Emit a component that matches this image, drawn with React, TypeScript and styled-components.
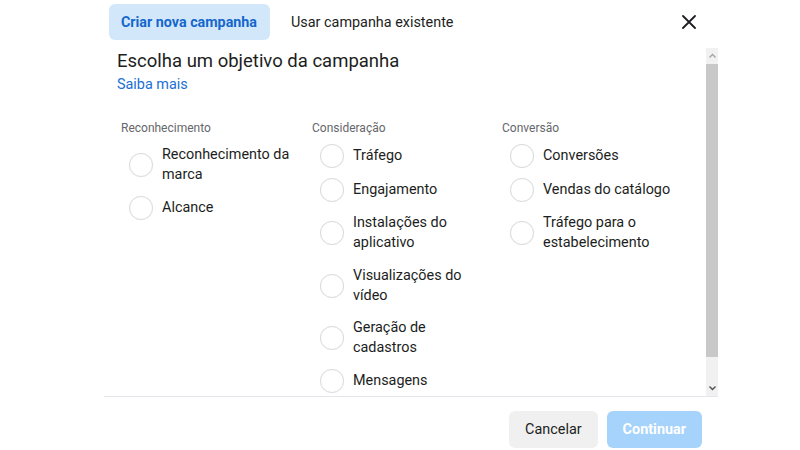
import React from "react";
import styled, { createGlobalStyle } from "styled-components";

const GlobalStyle = createGlobalStyle`
  * { box-sizing: border-box; }
  body {
    margin: 0;
    background: #ffffff;
    font-family: Roboto, "Liberation Sans", Arial, sans-serif;
    color: #1c1e21;
  }
`;

type Group = { title: string; options: string[] };

const groups: Group[] = [
  { title: "Reconhecimento", options: ["Reconhecimento da marca", "Alcance"] },
  {
    title: "Consideração",
    options: [
      "Tráfego",
      "Engajamento",
      "Instalações do aplicativo",
      "Visualizações do vídeo",
      "Geração de cadastros",
      "Mensagens",
    ],
  },
  {
    title: "Conversão",
    options: ["Conversões", "Vendas do catálogo", "Tráfego para o estabelecimento"],
  },
];

function CloseIcon() {
  return (
    <svg width="14" height="14" viewBox="0 0 14 14">
      <path d="M1 1L13 13M13 1L1 13" stroke="#1c1e21" strokeWidth="1.8" strokeLinecap="round" />
    </svg>
  );
}

function Arrow({ up }: { up?: boolean }) {
  return (
    <svg width="7" height="5" viewBox="0 0 7 5">
      <path d={up ? "M0.5 4.5L3.5 1.5L6.5 4.5" : "M0.5 0.5L3.5 3.5L6.5 0.5"} stroke={up ? "#a3a3a3" : "#505050"} strokeWidth="1.4" fill="none" />
    </svg>
  );
}

export default function App() {
  return (
    <>
      <GlobalStyle />
      <Dialog>
        <Header>
          <Tabs>
            <Tab active>Criar nova campanha</Tab>
            <Tab>Usar campanha existente</Tab>
          </Tabs>
          <CloseButton aria-label="Fechar">
            <CloseIcon />
          </CloseButton>
        </Header>
        <Body>
          <Content>
            <Title>Escolha um objetivo da campanha</Title>
            <LearnMore href="#">Saiba mais</LearnMore>
            <Columns>
              {groups.map((g) => (
                <Column key={g.title}>
                  <GroupTitle>{g.title}</GroupTitle>
                  <OptionList>
                    {g.options.map((o) => (
                      <Option key={o}>
                        <Radio />
                        <OptionLabel>{o}</OptionLabel>
                      </Option>
                    ))}
                  </OptionList>
                </Column>
              ))}
            </Columns>
          </Content>
          <Scrollbar>
            <ScrollButton>
              <Arrow up />
            </ScrollButton>
            <ScrollTrack>
              <Thumb />
            </ScrollTrack>
            <ScrollButton>
              <Arrow />
            </ScrollButton>
          </Scrollbar>
        </Body>
        <Footer>
          <Button>Cancelar</Button>
          <Button primary disabled>
            Continuar
          </Button>
        </Footer>
      </Dialog>
    </>
  );
}

const Dialog = styled.div`
  width: 614px;
  margin-left: 104px;
  display: flex;
  flex-direction: column;
`;

const Header = styled.div`
  height: 48px;
  display: flex;
  align-items: flex-start;
  justify-content: space-between;
  padding: 4px 22px 0 5px;
`;

const Tabs = styled.div`
  display: flex;
  align-items: center;
  gap: 9px;
`;

const Tab = styled.div<{ active?: boolean }>`
  height: 36px;
  display: flex;
  align-items: center;
  padding: 0 13px 0 12px;
  border-radius: 6px;
  font-size: ${(p) => (p.active ? "14.3px" : "14.4px")};
  font-weight: ${(p) => (p.active ? 700 : 400)};
  color: ${(p) => (p.active ? "#1467cc" : "#1c1e21")};
  background: ${(p) => (p.active ? "#d3e7fb" : "transparent")};
`;

const CloseButton = styled.button`
  border: 0;
  background: transparent;
  padding: 0;
  margin-top: 11px;
  width: 14px;
  height: 14px;
  display: flex;
  cursor: pointer;
`;

const Body = styled.div`
  height: 349px;
  display: flex;
  border-bottom: 1px solid #e4e6eb;
`;

const Content = styled.div`
  flex: 1;
  overflow: hidden;
  padding: 2px 0 0 13px;
`;

const Title = styled.h2`
  margin: 0;
  font-size: 18.5px;
  font-weight: 400;
  line-height: 22px;
`;

const LearnMore = styled.a`
  display: inline-block;
  margin-top: 3px;
  font-size: 14.4px;
  line-height: 20px;
  color: #1b6fd4;
  text-decoration: none;
`;

const Columns = styled.div`
  display: grid;
  grid-template-columns: 191px 190px 190px;
  margin-top: 26px;
  padding-left: 4px;
`;

const Column = styled.div`
  display: flex;
  flex-direction: column;
`;

const GroupTitle = styled.div`
  font-size: 12px;
  line-height: 14px;
  color: #65676b;
`;

const OptionList = styled.div`
  display: flex;
  flex-direction: column;
  gap: 10.2px;
  margin-top: 9px;
  padding-left: 8px;
`;

const Option = styled.label`
  display: flex;
  align-items: center;
  gap: 9px;
  min-height: 24px;
`;

const Radio = styled.span`
  flex: none;
  width: 24px;
  height: 24px;
  border-radius: 50%;
  border: 1px solid #d9dbde;
  box-shadow: 0 0 1px rgba(0, 0, 0, 0.08);
  background: #fff;
`;

const OptionLabel = styled.span`
  max-width: 134px;
  font-size: 14.4px;
  line-height: 20px;
  padding: 1px 0;
  color: #1c1e21;
`;

const Scrollbar = styled.div`
  width: 12px;
  display: flex;
  flex-direction: column;
  background: #f1f1f1;
`;

const ScrollButton = styled.div`
  height: 15px;
  display: flex;
  align-items: center;
  justify-content: center;
`;

const ScrollTrack = styled.div`
  flex: 1;
  padding: 1px 0 24px;
`;

const Thumb = styled.div`
  height: 100%;
  background: #c8c8c8;
`;

const Footer = styled.div`
  display: flex;
  justify-content: flex-end;
  gap: 9px;
  padding: 14px 16px 0 0;
`;

const Button = styled.button<{ primary?: boolean }>`
  height: 37px;
  padding: 0 16px;
  border: 0;
  border-radius: 6px;
  font-family: Roboto, "Liberation Sans", Arial, sans-serif;
  font-size: 14.4px;
  font-weight: ${(p) => (p.primary ? 700 : 400)};
  color: ${(p) => (p.primary ? "#ffffff" : "#1c1e21")};
  background: ${(p) => (p.primary ? "#a5d3fb" : "#f0f0f0")};
  cursor: pointer;
`;
